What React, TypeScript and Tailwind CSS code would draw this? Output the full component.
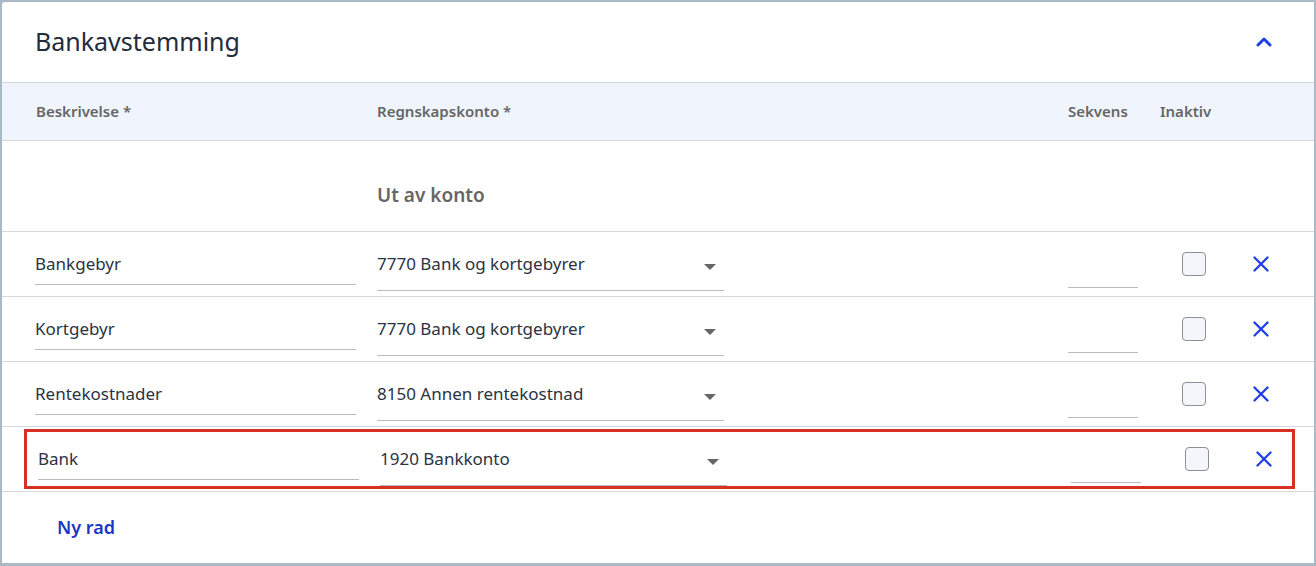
import { ChevronUp, X } from 'lucide-react';

const rows = [
  { desc: 'Bankgebyr', konto: '7770 Bank og kortgebyrer' },
  { desc: 'Kortgebyr', konto: '7770 Bank og kortgebyrer' },
  { desc: 'Rentekostnader', konto: '8150 Annen rentekostnad' },
  { desc: 'Bank', konto: '1920 Bankkonto', highlight: true },
];

function Row({ desc, konto }: { desc: string; konto: string }) {
  return (
    <div className="flex items-center h-full">
      <div className="w-[321px] h-[42px] border-b border-[#b8bcc2] flex items-center text-[17px] text-[#2a3342]">{desc}</div>
      <div className="ml-[21px] w-[347px] h-[48px] border-b border-[#b8bcc2] flex items-center justify-between text-[17px] text-[#2a3342] mt-[6px]">
        <span className="-mt-[6px]">{konto}</span>
        <span className="mr-[8px] w-0 h-0 border-l-[6px] border-r-[6px] border-t-[6px] border-l-transparent border-r-transparent border-t-[#666]" />
      </div>
      <div className="ml-[344px] w-[70px] h-[42px] border-b border-[#b8bcc2] mt-[6px]" />
      <div className="ml-[44px] w-[24px] h-[24px] rounded-[4px] border border-[#8a8f98] bg-[#f4f6fb]" />
      <X className="ml-[42px] text-[#1f3fe8]" size={26} strokeWidth={2.2} />
    </div>
  );
}

export default function App() {
  return (
    <div className="w-[1316px] h-[566px] bg-[#a9bac6] p-[2px] pb-[3px] font-['Inter',sans-serif]">
      <div className="bg-white h-full rounded-tl-[3px]">
        <div className="h-[81px] flex items-center justify-between pl-[33px] pr-[38px] border-b border-[#d5d8dc]">
          <h1 className="text-[25px] text-[#222c3c]">Bankavstemming</h1>
          <ChevronUp className="text-[#1f3fe8]" size={24} strokeWidth={3} />
        </div>
        <div className="h-[58px] bg-[#f0f4fc] flex items-center pl-[34px] text-[15px] font-semibold text-[#666] border-b border-[#d5d8dc]">
          <span className="w-[341px]">Beskrivelse *</span>
          <span className="w-[691px]">Regnskapskonto *</span>
          <span className="w-[92px]">Sekvens</span>
          <span>Inaktiv</span>
        </div>
        <div className="h-[91px] flex items-center pl-[375px] pt-[18px] text-[19px] font-semibold text-[#666] border-b border-[#d5d8dc]">Ut av konto</div>
        {rows.map((r) => (
          <div key={r.desc} className="h-[65px] border-b border-[#d5d8dc] py-[2px] pl-[22px] pr-[19px]">
            <div className={`h-full pl-[11px] ${r.highlight ? 'border-[3px] border-[#d93025] pl-[8px]' : ''}`}>
              <Row desc={r.desc} konto={r.konto} />
            </div>
          </div>
        ))}
        <div className="h-[70px] flex items-center pl-[55px]">
          <span className="text-[18px] font-semibold text-[#1a35c8]">Ny rad</span>
        </div>
      </div>
    </div>
  );
}
